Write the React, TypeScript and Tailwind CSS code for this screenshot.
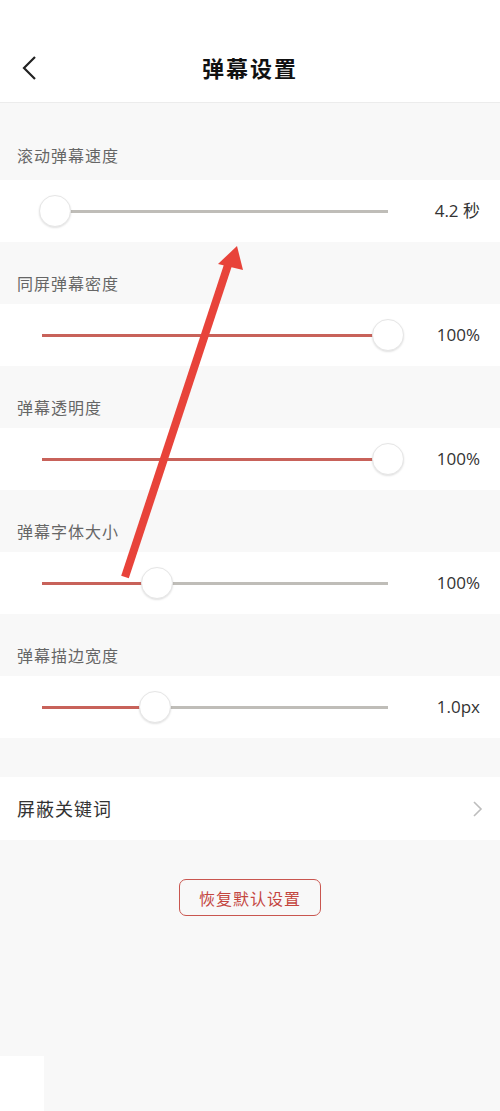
import React from "react";

const cjk = { fontFamily: '"Noto Sans CJK SC", "Noto Sans", sans-serif' };

interface SliderRow {
  label: string;
  value: string;
  thumb: number; // thumb centre, px from track start
  fill: number; // red part width
  first?: boolean;
}

const rows: SliderRow[] = [
  { label: "滚动弹幕速度", value: "4.2 秒", thumb: 13, fill: 0, first: true },
  { label: "同屏弹幕密度", value: "100%", thumb: 346, fill: 346 },
  { label: "弹幕透明度", value: "100%", thumb: 346, fill: 346 },
  { label: "弹幕字体大小", value: "100%", thumb: 115, fill: 115 },
  { label: "弹幕描边宽度", value: "1.0px", thumb: 113, fill: 113 },
];

const Slider = ({ thumb, fill }: { thumb: number; fill: number }) => (
  <div className="relative ml-[42px] h-[3px] w-[346px] bg-[#bfbdb8]">
    <div className="h-[3px] bg-[#c8625a]" style={{ width: fill }} />
    <div
      className="absolute top-1/2 h-[32px] w-[32px] -translate-x-1/2 -translate-y-1/2 rounded-full border border-[#e6e6e6] bg-white shadow-[0_1px_2px_rgba(0,0,0,0.12)]"
      style={{ left: thumb }}
    />
  </div>
);

export default function App() {
  return (
    <div className="relative flex min-h-[1111px] w-[500px] flex-col bg-[#f8f8f8]" style={cjk}>
      {/* header */}
      <div className="relative flex h-[103px] items-center justify-center border-b border-[#ececec] bg-white pt-[33px]">
        <svg className="absolute left-[20px] top-[55px]" width="18" height="26" viewBox="0 0 18 26">
          <polyline points="15,2 4,13 15,24" fill="none" stroke="#222" strokeWidth="2.2" />
        </svg>
        <h1 className="text-[22px] font-bold tracking-[2px] text-[#111]">弹幕设置</h1>
      </div>

      {rows.map((r) => (
        <div key={r.label}>
          <div
            className={`flex items-end pl-[17px] text-[16px] tracking-[1px] text-[#666] ${
              r.first ? "h-[77px] pb-[13px]" : "h-[62px] pb-[9px]"
            }`}
          >
            {r.label}
          </div>
          <div className="flex h-[62px] items-center bg-white">
            <Slider thumb={r.thumb} fill={r.fill} />
            <div
              className="ml-auto pr-[20px] text-[17px] text-[#333]"
              style={{ fontFamily: '"Open Sans", "Noto Sans CJK SC", sans-serif' }}
            >
              {r.value}
            </div>
          </div>
        </div>
      ))}

      <div className="mt-[39px] flex h-[63px] items-center justify-between bg-white pl-[17px] pr-[17px]">
        <span className="text-[18px] tracking-[1px] text-[#333]">屏蔽关键词</span>
        <svg width="11" height="16" viewBox="0 0 11 16">
          <polyline points="2,1 9,8 2,15" fill="none" stroke="#bdbdbd" strokeWidth="1.6" />
        </svg>
      </div>

      <div className="mt-[39px] flex justify-center">
        <button className="flex h-[37px] w-[142px] items-center justify-center rounded-[7px] border-[1.5px] border-[#c9564f] text-[16px] tracking-[1px] text-[#c4463f]">
          恢复默认设置
        </button>
      </div>

      <div className="mt-auto h-[55px] w-[44px] bg-white" />

      {/* annotation arrow */}
      <svg className="pointer-events-none absolute left-0 top-0" width="500" height="1111">
        <line x1="125" y1="577" x2="229" y2="262" stroke="#e8433a" strokeWidth="8" />
        <polygon points="237,246 218,264 243,270" fill="#e8433a" />
      </svg>
    </div>
  );
}
